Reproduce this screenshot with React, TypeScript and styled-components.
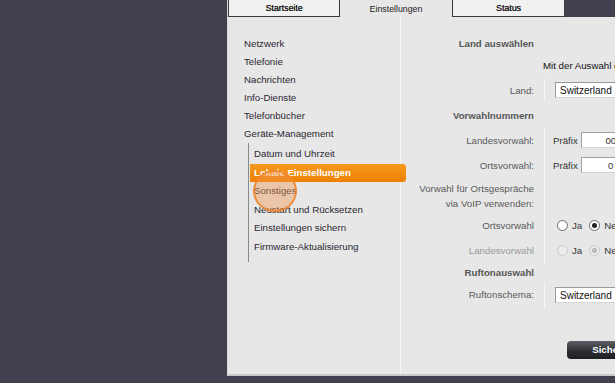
import React, { FC } from "react"
import styled, { createGlobalStyle, css } from "styled-components"

const GlobalStyle = createGlobalStyle`
  html, body {
    margin: 0;
    padding: 0;
    background: #423f4e;
    overflow: hidden;
  }
  body {
    font-family: "Liberation Sans", Arial, sans-serif;
    font-size: 9.7px;
  }
`

const NAV_ITEMS = [
  "Netzwerk",
  "Telefonie",
  "Nachrichten",
  "Info-Dienste",
  "Telefonbücher",
  "Geräte-Management",
]

const SUB_ITEMS = [
  "Datum und Uhrzeit",
  "Lokale Einstellungen",
  "Sonstiges",
  "Neustart und Rücksetzen",
  "Einstellungen sichern",
  "Firmware-Aktualisierung",
]

const TABS = [
  { label: "Startseite", width: 112 },
  { label: "Einstellungen", width: 112 },
  { label: "Status", width: 113 },
]

type RadioProps = { checked?: boolean; disabled?: boolean }

const Radio: FC<RadioProps> = ({ checked, disabled }) => (
  <RadioDot checked={checked} disabled={disabled} />
)

export default function App() {
  return (
    <>
      <GlobalStyle />
      <Screen>
        <Spacer />
        <Window>
          <TabBar>
            {TABS.map((t) => (
              <Tab
                key={t.label}
                active={t.label === "Einstellungen"}
                style={{ width: t.width }}>
                {t.label}
              </Tab>
            ))}
          </TabBar>
          <Body>
            <Nav>
              {NAV_ITEMS.map((item) => (
                <NavItem key={item}>{item}</NavItem>
              ))}
              <SubList>
                {SUB_ITEMS.map((item) => (
                  <SubItem
                    key={item}
                    active={item === "Lokale Einstellungen"}>
                    {item}
                  </SubItem>
                ))}
              </SubList>
              <ClickMarker />
            </Nav>
            <Content>
              <Heading>Land auswählen</Heading>
              <Note>Mit der Auswahl des Landes werden</Note>
              <Row height={28} pad={6}>
                <Label>Land:</Label>
                <Value>
                  <Select>Switzerland</Select>
                </Value>
              </Row>
              <Heading gap={2.5}>Vorwahlnummern</Heading>
              <Row height={25}>
                <Label>Landesvorwahl:</Label>
                <Value>
                  <Prefix>Präfix</Prefix>
                  <TextBox>00</TextBox>
                </Value>
              </Row>
              <Row height={25}>
                <Label>Ortsvorwahl:</Label>
                <Value>
                  <Prefix>Präfix</Prefix>
                  <TextBox>0</TextBox>
                </Value>
              </Row>
              <Row height={36}>
                <Label>
                  Vorwahl für Ortsgespräche
                  <br />
                  via VoIP verwenden:
                </Label>
                <Value />
              </Row>
              <Row height={23}>
                <Label>Ortsvorwahl</Label>
                <Value>
                  <Radio />
                  <RadioText>Ja</RadioText>
                  <Radio checked />
                  <RadioText>Nein</RadioText>
                </Value>
              </Row>
              <Row height={27}>
                <Label disabled>Landesvorwahl</Label>
                <Value>
                  <Radio disabled />
                  <RadioText>Ja</RadioText>
                  <Radio checked disabled />
                  <RadioText>Nein</RadioText>
                </Value>
              </Row>
              <Heading>Ruftonauswahl</Heading>
              <Row height={26}>
                <Label>Ruftonschema:</Label>
                <Value>
                  <Select>Switzerland</Select>
                </Value>
              </Row>
              <Actions>
                <SaveButton>Sichern</SaveButton>
              </Actions>
            </Content>
          </Body>
        </Window>
      </Screen>
    </>
  )
}

const Screen = styled.div`
  display: flex;
  width: 615px;
  height: 383px;
  overflow: hidden;
`

const Spacer = styled.div`
  width: 227px;
  flex-shrink: 0;
`

const Window = styled.div`
  flex: 1;
  height: 374px;
  display: flex;
  flex-direction: column;
  background: #e7e7e7;
  border-bottom: 2px solid #c9c9c9;
  border-left: 1px solid #d8d8d8;
`

const TabBar = styled.div`
  display: flex;
  height: 17px;
  background: #423f4e;
  flex-shrink: 0;
`

const Tab = styled.div<{ active?: boolean }>`
  box-sizing: border-box;
  height: 17px;
  flex-shrink: 0;
  display: flex;
  align-items: center;
  justify-content: center;
  font-size: 8.8px;
  color: #222;
  ${({ active }) =>
    active
      ? css`
          background: #e7e7e7;
        `
      : css`
          background: #f1f1f1;
          border: 1px solid #3a3a3a;
          border-top: none;
          color: #111;
          text-shadow: 0.3px 0 0 #333;
        `}
`

const Body = styled.div`
  flex: 1;
  display: flex;
`

const Nav = styled.div`
  position: relative;
  z-index: 1;
  width: 172px;
  flex-shrink: 0;
  padding: 18px 0 0 16px;
  box-sizing: border-box;
`

const NavItem = styled.div`
  height: 18px;
  line-height: 18px;
  color: #2a2630;
`

const SubList = styled.div`
  margin: 0 -6px 0 4px;
  border-left: 1px solid #8a8a8a;
  padding: 2px 0 6px 0;
`

const SubItem = styled.div<{ active?: boolean }>`
  height: 18.5px;
  line-height: 18.5px;
  margin-left: 1px;
  padding-left: 4px;
  color: #2a2630;
  ${({ active }) =>
    active &&
    css`
      background: linear-gradient(#f59a1e, #ee8000);
      color: #fff;
      font-weight: bold;
      border-radius: 0 3px 3px 0;
    `}
`

const ClickMarker = styled.div`
  position: absolute;
  left: 25px;
  top: 153px;
  width: 44px;
  height: 42px;
  border-radius: 50%;
  box-sizing: border-box;
  border: 2px solid rgba(240, 130, 40, 0.85);
  background: rgba(240, 150, 80, 0.42);
`

const Content = styled.div`
  flex: 1;
  border-left: 1px solid #f6f6f6;
  padding-top: 18px;
  display: flex;
  flex-direction: column;
`

const Heading = styled.div<{ gap?: number }>`
  width: 133px;
  height: 18px;
  line-height: 18px;
  margin-bottom: ${({ gap }) => gap ?? 0}px;
  text-align: right;
  font-weight: bold;
  color: #575757;
  flex-shrink: 0;
`

const Note = styled.div`
  height: 26px;
  line-height: 26px;
  padding-left: 142px;
  white-space: nowrap;
  color: #111;
  flex-shrink: 0;
`

const Row = styled.div<{ height: number; pad?: number }>`
  display: flex;
  height: ${({ height }) => height}px;
  box-sizing: border-box;
  padding-bottom: ${({ pad }) => pad ?? 0}px;
  flex-shrink: 0;
`

const Label = styled.div<{ disabled?: boolean }>`
  width: 143px;
  box-sizing: border-box;
  padding-right: 10px;
  display: flex;
  align-items: center;
  justify-content: flex-end;
  text-align: right;
  line-height: 15px;
  color: ${({ disabled }) => (disabled ? "#9a9a9a" : "#5a5a5a")};
`

const Value = styled.div`
  flex: 1;
  border-left: 1px solid #f6f6f6;
  display: flex;
  align-items: center;
  padding-left: 10px;
  white-space: nowrap;
`

const Select = styled.div`
  width: 120px;
  height: 16px;
  line-height: 15px;
  box-sizing: border-box;
  background: #fff;
  border: 1px solid #9a9a9a;
  border-right-color: #d5d5d5;
  border-bottom-color: #d5d5d5;
  padding-left: 4px;
  font-size: 10px;
  color: #111;
`

const Prefix = styled.span`
  color: #333;
  margin: 0 3px 0 -2px;
`

const TextBox = styled.div`
  width: 60px;
  height: 16px;
  line-height: 15px;
  box-sizing: border-box;
  background: #fff;
  border: 1px solid #a0a0a0;
  border-right-color: #d5d5d5;
  border-bottom-color: #d5d5d5;
  text-align: center;
  color: #333;
`

const RadioDot = styled.span<RadioProps>`
  width: 11px;
  height: 11px;
  box-sizing: border-box;
  border-radius: 50%;
  border: 1px solid ${({ disabled }) => (disabled ? "#c8c8c8" : "#6a6a6a")};
  background: ${({ disabled }) => (disabled ? "#ececec" : "#fff")};
  display: inline-flex;
  align-items: center;
  justify-content: center;
  margin-left: 2px;
  &::after {
    content: "";
    display: ${({ checked }) => (checked ? "block" : "none")};
    width: 5px;
    height: 5px;
    border-radius: 50%;
    background: ${({ disabled }) => (disabled ? "#b8b8b8" : "#222")};
  }
`

const RadioText = styled.span`
  color: #333;
  margin: 0 5px 0 4px;
`

const Actions = styled.div`
  padding: 33px 0 0 166px;
`

const SaveButton = styled.div`
  width: 86px;
  height: 18px;
  line-height: 18px;
  border-radius: 4px;
  background: linear-gradient(#5e6066, #2a2b30 60%, #1e1f23);
  color: #fff;
  font-weight: bold;
  text-align: center;
`
